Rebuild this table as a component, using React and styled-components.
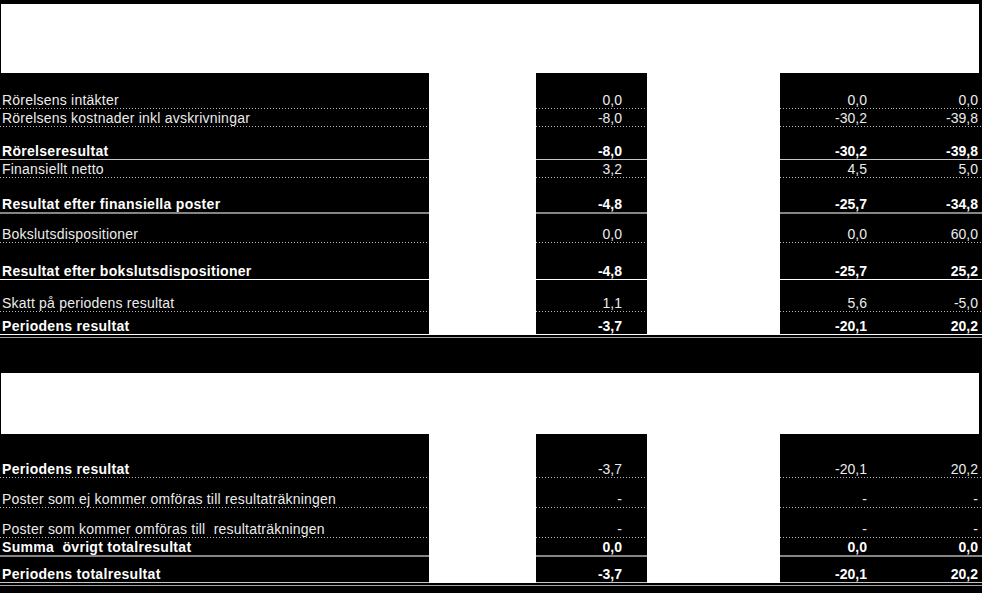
import styled, { createGlobalStyle, css } from 'styled-components';

const GlobalStyle = createGlobalStyle`
  html, body {
    margin: 0;
    padding: 0;
    background: #000;
  }
  body {
    font-family: "Liberation Sans", Arial, sans-serif;
  }
`;

const Page = styled.div`
  width: 982px;
  height: 593px;
  background: #000;
  overflow: hidden;
  display: flex;
  flex-direction: column;
`;

const TitleBox = styled.div`
  width: 978px;
  height: ${(p) => p.$h}px;
  margin-top: ${(p) => p.$top}px;
  margin-left: 1px;
  background: #fff;
  flex-shrink: 0;
`;

const Table = styled.div`
  display: flex;
  flex-direction: column;
`;

const Row = styled.div`
  display: grid;
  grid-template-columns: 429px 107px 111px 133px 113px 89px;
  height: ${(p) => p.$h}px;
`;

const lines = {
  dot: css`
    padding-bottom: 1px;
    background: linear-gradient(to right, #b8b8b8 1px, transparent 1px) left bottom / 3px 1px repeat-x;
  `,
  light: css`
    border-bottom: 1px solid #c6c6c6;
  `,
  gray: css`
    border-bottom: 2px solid #858585;
  `,
  white: css`
    border-bottom: 1px solid #fff;
  `,
};

const Cell = styled.div`
  box-sizing: border-box;
  display: flex;
  align-items: flex-end;
  background-color: #000;
  font-size: 14px;
  line-height: 16px;
  white-space: pre;
  color: ${(p) => (p.$bold ? '#fff' : '#ececec')};
  font-weight: ${(p) => (p.$bold ? 700 : 400)};
  ${(p) => lines[p.$line]}
`;

const Label = styled(Cell)`
  padding-left: 2px;
  letter-spacing: ${(p) => (p.$bold ? '0.3px' : '0.22px')};
`;

const Num = styled(Cell)`
  justify-content: flex-end;
  padding-right: ${(p) => p.$pr}px;
`;

const Gap = styled.div`
  background: #fff;
`;

const Separator = styled.div`
  height: 2px;
  border-bottom: 1px solid #a3a3a3;
  flex-shrink: 0;
`;

const table1 = [
  { label: 'Rörelsens intäkter', v: ['0,0', '0,0', '0,0'], h: 36, line: 'dot' },
  { label: 'Rörelsens kostnader inkl avskrivningar', v: ['-8,0', '-30,2', '-39,8'], h: 18, line: 'dot' },
  { label: 'Rörelseresultat', v: ['-8,0', '-30,2', '-39,8'], h: 33, line: 'light', bold: true },
  { label: 'Finansiellt netto', v: ['3,2', '4,5', '5,0'], h: 18, line: 'dot' },
  { label: 'Resultat efter finansiella poster', v: ['-4,8', '-25,7', '-34,8'], h: 36, line: 'gray', bold: true },
  { label: 'Bokslutsdispositioner', v: ['0,0', '0,0', '60,0'], h: 29, line: 'dot' },
  { label: 'Resultat efter bokslutsdispositioner', v: ['-4,8', '-25,7', '25,2'], h: 37, line: 'white', bold: true },
  { label: 'Skatt på periodens resultat', v: ['1,1', '5,6', '-5,0'], h: 32, line: 'dot' },
  { label: 'Periodens resultat', v: ['-3,7', '-20,1', '20,2'], h: 23, line: 'white', bold: true },
];

const table2 = [
  { label: 'Periodens resultat', v: ['-3,7', '-20,1', '20,2'], h: 44, line: 'dot', bold: true, plainNums: true },
  { label: 'Poster som ej kommer omföras till resultaträkningen', v: ['-', '-', '-'], h: 30, line: 'dot' },
  { label: 'Poster som kommer omföras till  resultaträkningen', v: ['-', '-', '-'], h: 30, line: 'dot' },
  { label: 'Summa  övrigt totalresultat', v: ['0,0', '0,0', '0,0'], h: 19, line: 'gray', bold: true },
  { label: 'Periodens totalresultat', v: ['-3,7', '-20,1', '20,2'], h: 26, line: 'light', bold: true },
];

const ResultRow = ({ row }) => {
  const numBold = row.bold && !row.plainNums;
  return (
    <Row $h={row.h}>
      <Label $line={row.line} $bold={row.bold}>{row.label}</Label>
      <Gap />
      <Num $line={row.line} $bold={numBold} $pr={25}>{row.v[0]}</Num>
      <Gap />
      <Num $line={row.line} $bold={numBold} $pr={26}>{row.v[1]}</Num>
      <Num $line={row.line} $bold={numBold} $pr={4}>{row.v[2]}</Num>
    </Row>
  );
};

const App = () => (
  <>
    <GlobalStyle />
    <Page>
      <TitleBox $top={4} $h={69} />
      <Table>
        {table1.map((row) => (
          <ResultRow key={row.label} row={row} />
        ))}
      </Table>
      <Separator />
      <TitleBox $top={35} $h={61} />
      <Table>
        {table2.map((row) => (
          <ResultRow key={row.label} row={row} />
        ))}
      </Table>
      <Separator />
    </Page>
  </>
);

export default App;
